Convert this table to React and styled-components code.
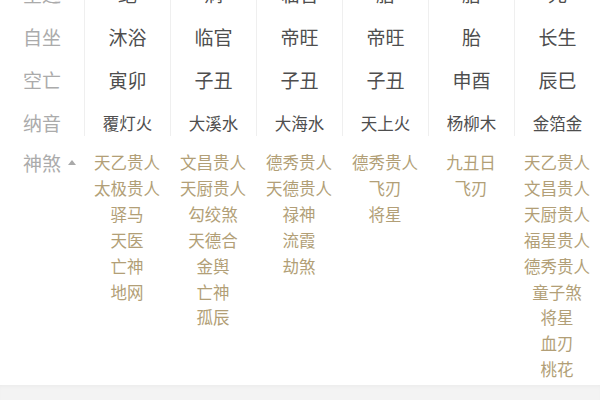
import React from "react";
import styled, { createGlobalStyle } from "styled-components";

const Global = createGlobalStyle`
  html, body { margin: 0; padding: 0; background: #fff; }
  body { width: 600px; height: 400px; overflow: hidden; font-family: "Noto Sans CJK SC", "Noto Sans", sans-serif; }
`;

const Page = styled.div`
  width: 600px;
  height: 400px;
  overflow: hidden;
  display: flex;
  flex-direction: column;
  background: #fff;
`;

const Table = styled.div`
  display: grid;
  grid-template-columns: 84px repeat(6, 1fr);
  margin-top: -28px;
`;

const Label = styled.div`
  padding: 9px 0 ${(p) => (p.$last ? 0 : 8)}px 23px;
  line-height: 26px;
  font-size: 19px;
  color: #ababab;
  white-space: nowrap;
  display: flex;
  align-items: center;
  gap: 7px;
`;

const Cell = styled.div`
  padding: 9px 0 ${(p) => (p.$last ? 0 : 8)}px;
  line-height: 26px;
  font-size: ${(p) => (p.$small ? 16.5 : 19)}px;
  color: #4e4e4e;
  text-align: center;
  white-space: nowrap;
  border-left: 1px solid #efefef;
`;

const Shensha = styled.div`
  display: grid;
  grid-template-columns: 84px repeat(6, 1fr);
  padding: 14px 0 2px;
`;

const ShenshaLabel = styled(Label)`
  padding: 0 0 0 23px;
  align-items: flex-start;
  height: 26px;
`;

const Triangle = styled.span`
  width: 0;
  height: 0;
  margin-top: 10px;
  border-left: 4px solid transparent;
  border-right: 4px solid transparent;
  border-bottom: 5px solid #a9a9a9;
`;

const ItemList = styled.div`
  display: flex;
  flex-direction: column;
  align-items: center;
`;

const Item = styled.div`
  line-height: 25.9px;
  font-size: 16.5px;
  color: #b29f77;
  white-space: nowrap;
`;

const Footer = styled.div`
  flex: 1;
  background: #f3f3f3;
  box-shadow: inset 0 3px 4px -2px rgba(0, 0, 0, 0.04);
`;

const rows = [
  { label: "星运", values: ["绝", "病", "临官", "胎", "胎", "死"] },
  { label: "自坐", values: ["沐浴", "临官", "帝旺", "帝旺", "胎", "长生"] },
  { label: "空亡", values: ["寅卯", "子丑", "子丑", "子丑", "申酉", "辰巳"] },
  { label: "纳音", values: ["覆灯火", "大溪水", "大海水", "天上火", "杨柳木", "金箔金"], small: true },
];

const shensha = [
  ["天乙贵人", "太极贵人", "驿马", "天医", "亡神", "地网"],
  ["文昌贵人", "天厨贵人", "勾绞煞", "天德合", "金舆", "亡神", "孤辰"],
  ["德秀贵人", "天德贵人", "禄神", "流霞", "劫煞"],
  ["德秀贵人", "飞刃", "将星"],
  ["九丑日", "飞刃"],
  ["天乙贵人", "文昌贵人", "天厨贵人", "福星贵人", "德秀贵人", "童子煞", "将星", "血刃", "桃花"],
];

export default function App() {
  return (
    <Page>
      <Global />
      <Table>
        {rows.map((r, i) => {
          const last = i === rows.length - 1;
          return (
            <React.Fragment key={r.label}>
              <Label $last={last}>{r.label}</Label>
              {r.values.map((v, j) => (
                <Cell key={j} $last={last} $small={r.small}>
                  {v}
                </Cell>
              ))}
            </React.Fragment>
          );
        })}
      </Table>
      <Shensha>
        <ShenshaLabel>
          神煞
          <Triangle />
        </ShenshaLabel>
        {shensha.map((col, i) => (
          <ItemList key={i}>
            {col.map((s, j) => (
              <Item key={j}>{s}</Item>
            ))}
          </ItemList>
        ))}
      </Shensha>
      <Footer />
    </Page>
  );
}
